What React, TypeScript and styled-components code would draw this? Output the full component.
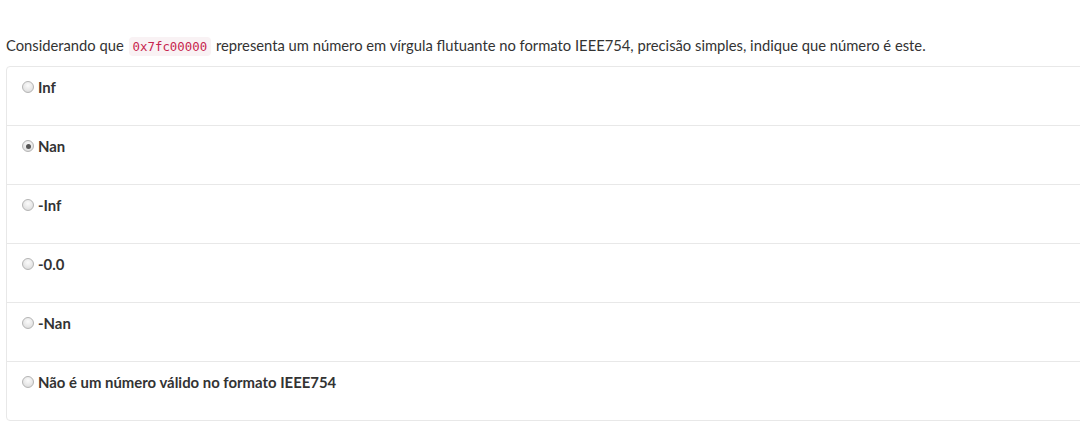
import React from "react";
import styled, { createGlobalStyle } from "styled-components";

const Global = createGlobalStyle`
  html, body { margin: 0; padding: 0; background: #fff; overflow: hidden; }
  body { font-family: Lato, "Open Sans", sans-serif; font-size: 14.75px; line-height: 20px; color: #333; }
`;

const Page = styled.div`
  padding: 35px 0 0 6px;
  width: 1100px;
`;

const Question = styled.p`
  margin: 0 0 9px 0;
  line-height: 20px;
  font-size: 14.75px;
`;

const Code = styled.code`
  font-family: "DejaVu Sans Mono", "Liberation Mono", monospace;
  font-size: 12.4px;
  color: #c7254e;
  background: #f9f2f4;
  border-radius: 4px;
  padding: 2px 4px;
  margin: 0 1px;
`;

const List = styled.div`
  border: 1px solid #e8e8e8;
  border-radius: 4px;
  width: 1090px;
`;

const Item = styled.label`
  display: flex;
  align-items: center;
  padding: 10px 15px 28px 15px;
  line-height: 20px;
  font-size: 14.9px;
  font-weight: 700;
  color: #333;
  & + & { border-top: 1px solid #e8e8e8; }
`;

const Radio = styled.span<{ $checked?: boolean }>`
  box-sizing: border-box;
  width: 12px;
  height: 12px;
  border-radius: 50%;
  margin: 0 4px 0 0;
  border: 1px solid #b4b4b4;
  background: radial-gradient(circle at 50% 35%, #fbfbfb 0%, #e6e6e6 60%, #d4d4d4 100%);
  position: relative;
  flex: none;
  &::after {
    content: "";
    display: ${(p) => (p.$checked ? "block" : "none")};
    position: absolute;
    left: 2.5px;
    top: 2.5px;
    width: 5px;
    height: 5px;
    border-radius: 50%;
    background: #555;
  }
`;

const options = [
  { label: "Inf" },
  { label: "Nan", checked: true },
  { label: "-Inf" },
  { label: "-0.0" },
  { label: "-Nan" },
  { label: "Não é um número válido no formato IEEE754" },
];

export default function App() {
  return (
    <>
      <Global />
      <Page>
        <Question>
          Considerando que <Code>0x7fc00000</Code> representa um número em vírgula flutuante no formato IEEE754, precisão simples, indique que número é este.
        </Question>
        <List>
          {options.map((o) => (
            <Item key={o.label}>
              <Radio $checked={o.checked} />
              {o.label}
            </Item>
          ))}
        </List>
      </Page>
    </>
  );
}
